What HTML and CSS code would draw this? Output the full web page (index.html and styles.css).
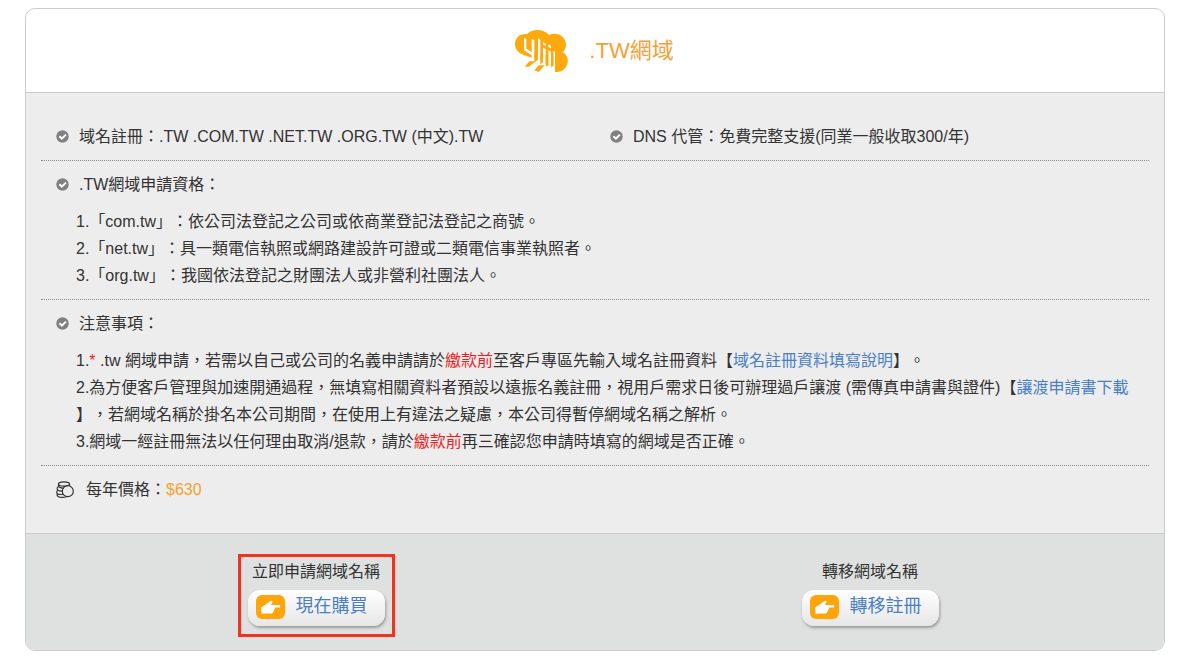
FILE: index.html
```html
<!DOCTYPE html>
<html lang="zh-Hant">
<head>
<meta charset="utf-8">
<title>.TW網域</title>
<link rel="stylesheet" href="styles.css">
</head>
<body>
<svg class="sprite" aria-hidden="true">
  <symbol id="check" viewBox="0 0 13 13">
    <circle cx="6.500" cy="6.500" r="6.200" fill="#808080"/>
    <path d="M3.400 6.300L5.900 8.700L9.900 4.600" fill="none" stroke="#fff" stroke-width="2"/>
  </symbol>
  <symbol id="hand" viewBox="0 0 29 24">
    <rect width="29" height="24" rx="6" fill="#ffa50a"/>
    <path d="M5 12.500L9 10L14.500 6C16 5 17.300 6.500 16.300 7.700L14.800 10H23C24.700 10 24.700 12.600 23 12.600H18.500C19.300 13.300 19 14.300 18 14.600C18.500 15.600 18 16.500 17 16.700C17 18 16.300 18.600 15 18.600H11C9.500 18.600 8.500 18.200 7.500 18.600L5.500 19.200Z" fill="#fff"/>
  </symbol>
</svg>
<main class="card">
  <header class="card-header">
    <svg class="logo" viewBox="45 24 165 132" aria-hidden="true">
      <path fill="#ffa90f" d="M48 69C48 49 66 36 84 40C98 22 134 22 150 42C176 31 201 48 201 72C201 81 196 90 190 94C202 99 208 110 206 124C203 142 190 153 174 153H168V134L150 138L136 126L124 118L104 112L80 104C60 98 48 87 48 69Z"/>
      <g fill="#fff">
        <path d="M75 50L82 54V83L98 94V54L106 58V118H98V103L75 88Z"/>
        <path d="M117 52L124 56V128H117Z"/>
        <path d="M132 80L140 84V140H132Z"/>
        <path d="M148 88L156 92V142H148Z"/>
        <path d="M132 64L140 68V75L132 71Z"/>
        <path d="M148 70L156 74V82L148 78Z"/>
        <path d="M163 90L168 92V153H163Z"/>
        <path d="M72 108L98 112L132 122L148 137L163 144V156H72Z"/>
      </g>
      <g fill="#ffa90f">
        <path d="M106 100H117V116L109 122H106Z"/>
        <path d="M124 100H132V124L124 130Z"/>
        <path d="M140 100H148V132L140 136Z"/>
        <path d="M156 100H163V134L156 139Z"/>
        <path d="M91 121H110L90 137H77Z"/>
        <path d="M119 133H137L119 153L106 148Z"/>
      </g>
    </svg>
    <h1 class="title">.TW網域</h1>
  </header>
  <div class="card-body">
    <section class="section columns">
      <h2 class="item"><svg class="check"><use href="#check"/></svg>域名註冊：.TW .COM.TW .NET.TW .ORG.TW (中文).TW</h2>
      <h2 class="item"><svg class="check"><use href="#check"/></svg>DNS 代管：免費完整支援(同業一般收取300/年)</h2>
    </section>
    <section class="section">
      <h2 class="item"><svg class="check"><use href="#check"/></svg>.TW網域申請資格：</h2>
      <div class="notes">
        <p>1.「com.tw」：依公司法登記之公司或依商業登記法登記之商號。</p>
        <p>2.「net.tw」：具一類電信執照或網路建設許可證或二類電信事業執照者。</p>
        <p>3.「org.tw」：我國依法登記之財團法人或非營利社團法人。</p>
      </div>
    </section>
    <section class="section">
      <h2 class="item"><svg class="check"><use href="#check"/></svg>注意事項：</h2>
      <div class="notes">
        <p>1.<span class="alert">*</span> .tw 網域申請，若需以自己或公司的名義申請請於<span class="alert">繳款前</span>至客戶專區先輸入域名註冊資料【<a href="#guide">域名註冊資料填寫說明</a>】。</p>
        <p>2.為方便客戶管理與加速開通過程，無填寫相關資料者預設以遠振名義註冊，視用戶需求日後可辦理過戶讓渡 (需傳真申請書與證件)【<a href="#form">讓渡申請書下載</a><wbr>】，若網域名稱於掛名本公司期間，在使用上有違法之疑慮，本公司得暫停網域名稱之解析。</p>
        <p>3.網域一經註冊無法以任何理由取消/退款，請於<span class="alert">繳款前</span>再三確認您申請時填寫的網域是否正確。</p>
      </div>
    </section>
    <section class="section">
      <h2 class="item price-row">
        <svg class="coins" viewBox="0 0 18 17" fill="none" stroke="#333" stroke-width="1.200" aria-hidden="true">
          <ellipse cx="8" cy="3" rx="5.500" ry="2.200"/>
          <path d="M2.500 3V5.500C4 7 6 7.300 8 7M2.500 5.500C0.500 6.500 1 8.500 2 9.200C3.500 10 5 10.200 6.500 10M2 9.200C0.300 10 0.500 12 1.500 12.700C3 13.500 5 13.700 7 13.300M1.500 12.700C0 15 3 16.400 6 16.400C8 16.400 9.500 16.200 10.500 15.800M13.500 3V4.500"/>
          <circle cx="11.800" cy="10.200" r="5.500"/>
        </svg>
        <span>每年價格：<span class="price">$630</span></span>
      </h2>
    </section>
  </div>
  <footer class="card-footer">
    <div class="action">
      <div class="action-box marked">
        <span>立即申請網域名稱</span>
        <a class="button" href="#buy"><svg class="hand"><use href="#hand"/></svg>現在購買</a>
      </div>
    </div>
    <div class="action">
      <div class="action-box">
        <span>轉移網域名稱</span>
        <a class="button" href="#transfer"><svg class="hand"><use href="#hand"/></svg>轉移註冊</a>
      </div>
    </div>
  </footer>
</main>
</body>
</html>
```
FILE: styles.css
```css
* {
  box-sizing: border-box;
}

body {
  margin: 8px 13px 8px 25px;
  background: #fff;
  color: #333;
  font: 16px/27px "Liberation Sans", "Noto Sans CJK TC", sans-serif;
  text-spacing-trim: space-all;
}

h1,
h2,
p {
  margin: 0;
  font-weight: normal;
}

a {
  color: #4a7fc4;
  text-decoration: none;
}

.sprite {
  position: absolute;
  width: 0;
  height: 0;
}

.card {
  border: 1px solid #ccc;
  border-radius: 10px;
  overflow: hidden;
}

.card-header {
  display: flex;
  justify-content: center;
  align-items: center;
  gap: 20px;
  height: 84px;
  padding-right: 2px;
  border-bottom: 1px solid #ccc;
}

.logo {
  width: 55px;
  height: 44px;
}

.title {
  color: #f5a035;
  font-size: 22px;
}

.card-body {
  padding: 20px 15px;
  background: #ededed;
}

.section {
  padding: 10px 15px;
  border-bottom: 1px dotted #888;
}

.section:last-child {
  border-bottom: 0;
}

.columns {
  display: grid;
  grid-template-columns: 1fr 1fr;
  column-gap: 30px;
}

.item {
  display: flex;
  align-items: center;
  gap: 10px;
  font-size: 16px;
}

.check {
  width: 13px;
  height: 13px;
}

.coins {
  width: 18px;
  height: 17px;
}

.price-row {
  gap: 12px;
}

.price {
  color: #f9a030;
}

.notes {
  padding: 10px 0 0 20px;
}

.alert {
  color: #f21d1d;
}

.card-footer {
  display: grid;
  grid-template-columns: 1fr 1fr;
  padding: 20px 17px 13px 13px;
  border-top: 1px solid #ccc;
  background: #dfe1e0;
}

.action {
  display: flex;
  justify-content: center;
}

.action-box {
  display: flex;
  flex-direction: column;
  align-items: center;
  gap: 5px;
  padding: 1px 7px 8px;
  border: 3px solid transparent;
}

.marked {
  border-color: #f4311a;
}

.button {
  display: flex;
  align-items: center;
  gap: 11px;
  height: 36px;
  padding: 0 17px 3px 8px;
  border-radius: 12px;
  background: linear-gradient(#fff, #e6e6e6);
  box-shadow: 1px 2px 3px #999;
  font-size: 18px;
}

.hand {
  width: 29px;
  height: 24px;
}
```
